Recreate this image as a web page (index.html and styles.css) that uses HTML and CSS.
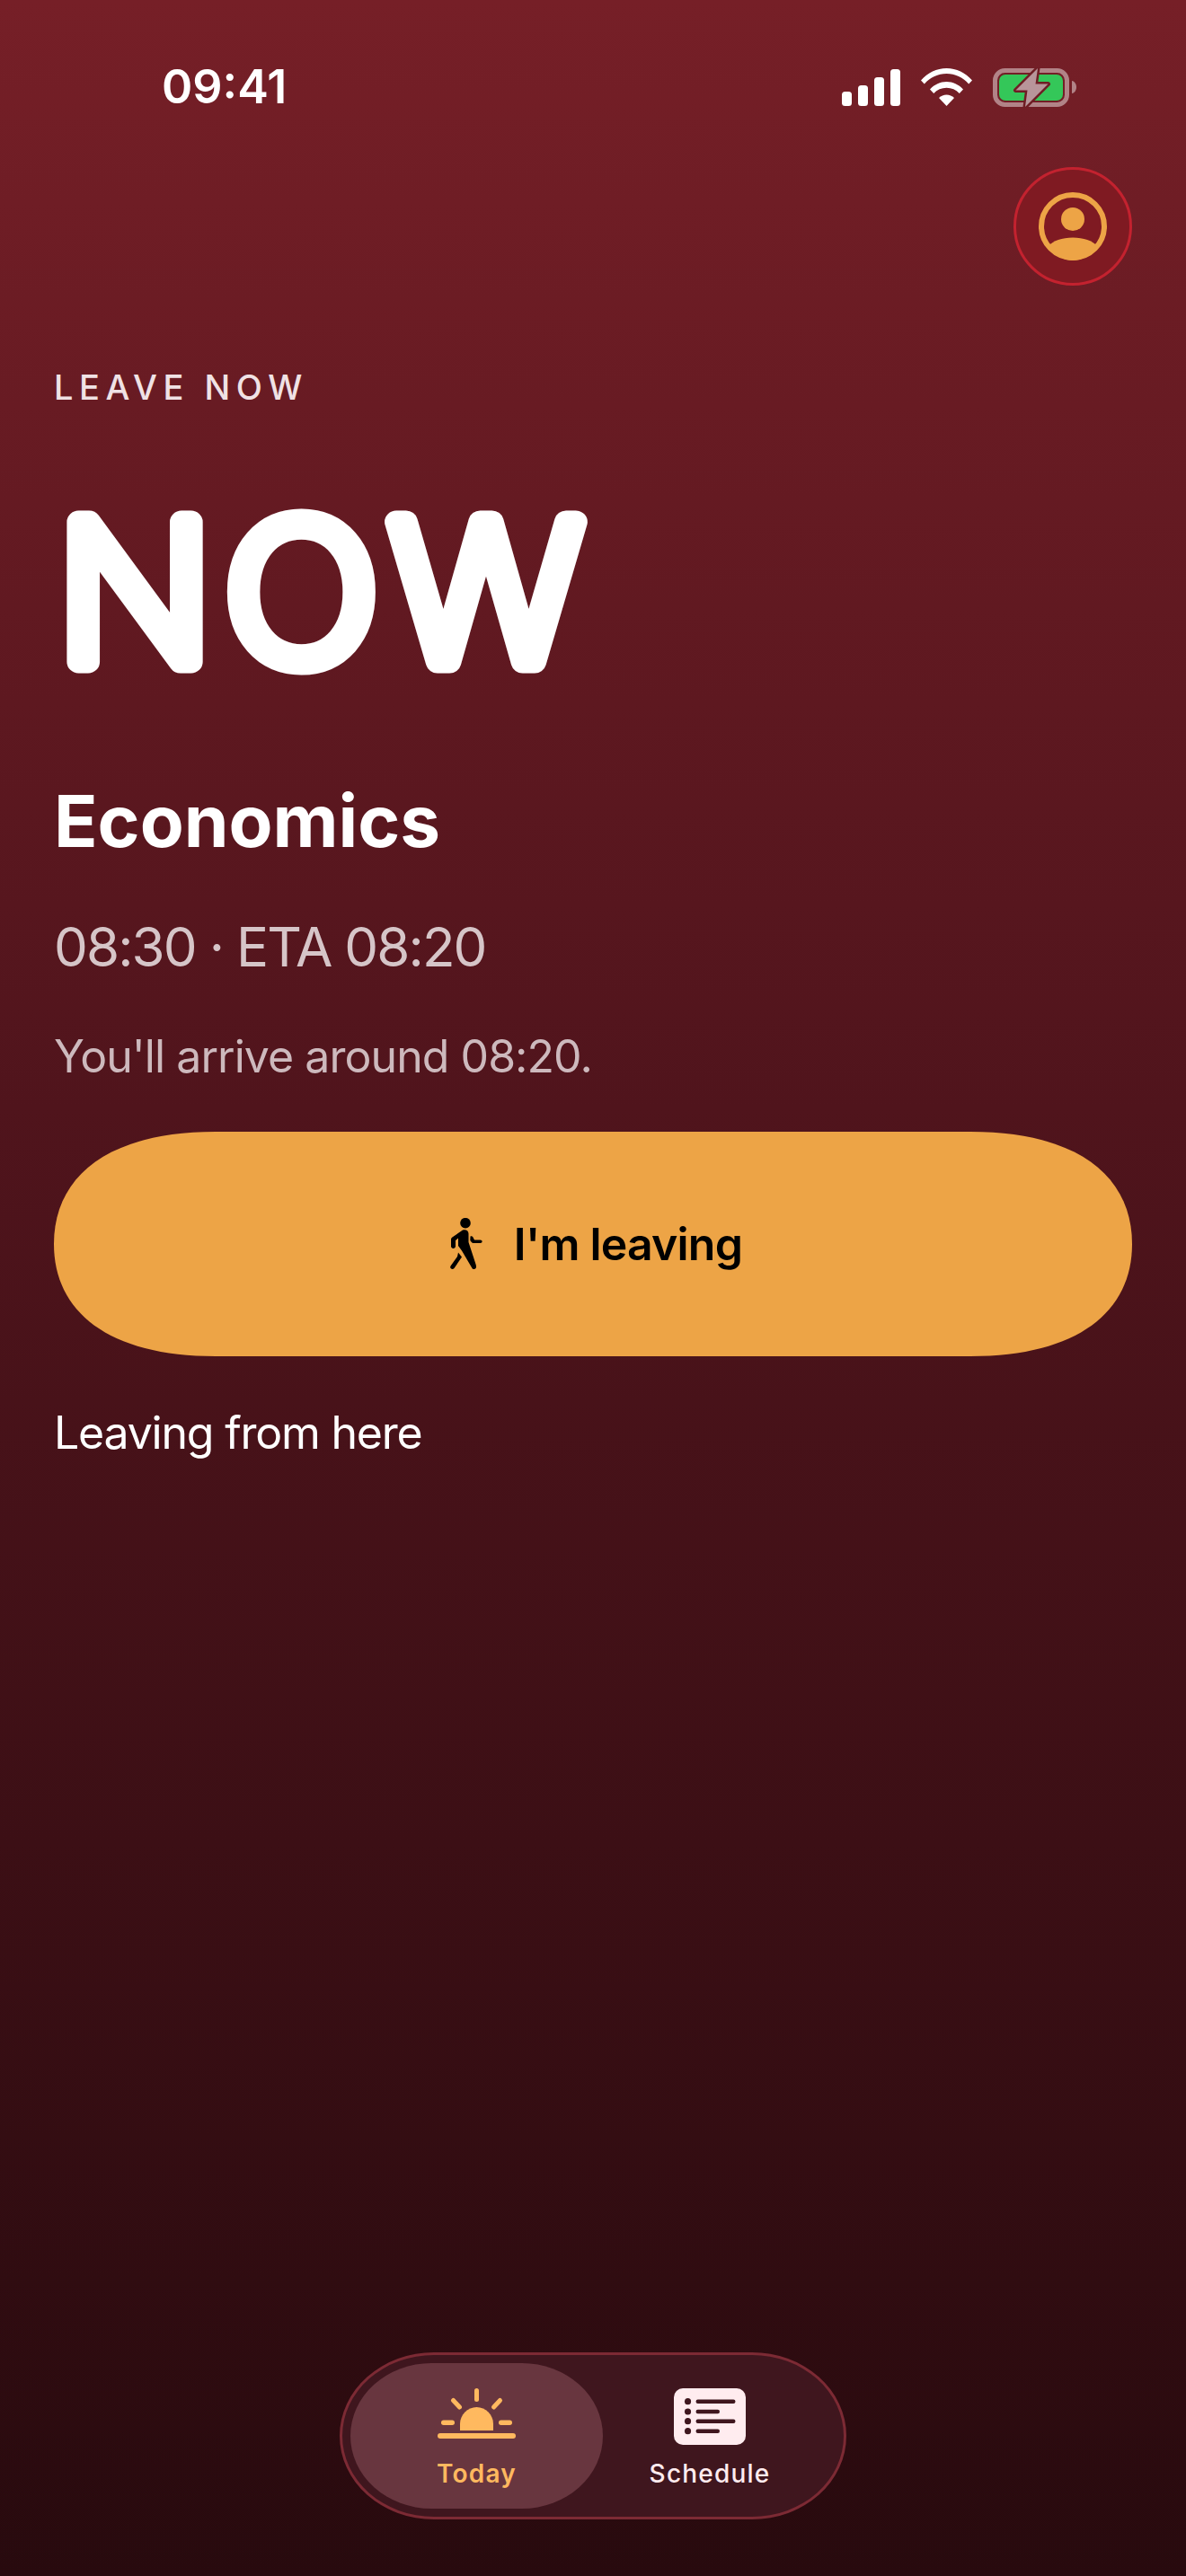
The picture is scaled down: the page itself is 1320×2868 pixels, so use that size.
FILE: index.html
```html
<!DOCTYPE html>
<html lang="en">
<head>
  <meta charset="UTF-8" />
  <meta name="viewport" content="width=device-width, initial-scale=1.0" />
  <title>Leave now</title>
  <link rel="stylesheet" href="styles.css">
</head>
<body>
  <div class="screen">
    <header class="status-bar">
      <span class="clock">09:41</span>
      <div class="status-icons">
        <svg class="icon-signal" viewBox="0 0 65 41" width="65" height="41">
          <rect x="0" y="25" width="11" height="16" rx="3.5" />
          <rect x="18" y="18" width="11" height="23" rx="3.5" />
          <rect x="36" y="9" width="11" height="32" rx="3.5" />
          <rect x="54" y="0" width="11" height="41" rx="3.5" />
        </svg>
        <svg class="icon-wifi" viewBox="0 0 57 42" width="57" height="42">
          <path d="M0 13.500C7.500 4.800 17.500 0 28.500 0S49.500 4.800 57 13.500L53.200 17.500C46.500 10 38 6 28.500 6S10.500 10 3.800 17.500Z" />
          <path d="M10 23.500C15 18 21.500 15 28.500 15S42 18 47 23.500L42.800 28C39 24 34 21.800 28.500 21.800S18 24 14.200 28Z" />
          <path d="M20 33C22.300 30.700 25.300 29.500 28.500 29.500S34.700 30.700 37 33L28.500 42Z" />
        </svg>
        <svg class="icon-battery" viewBox="0 0 93 45" width="93" height="45">
          <rect class="batt-frame" x="2.500" y="3.500" width="80" height="38" rx="11" />
          <path class="batt-nub" d="M88 15C91 15.500 93 18.500 93 22S91 28.500 88 29Z" />
          <rect class="batt-level" x="7" y="8" width="71" height="29" rx="7" />
          <path class="batt-bolt" d="M50 1L25.500 25.500H38.500L36 44L61.500 18.500H47.500Z" />
        </svg>
      </div>
    </header>

    <div class="top-actions">
      <button class="profile-btn" aria-label="Profile">
        <svg viewBox="0 0 76 76" width="76" height="76">
          <circle class="ring" cx="38" cy="38" r="35" />
          <circle class="fill" cx="38" cy="30" r="13" />
          <path class="fill" d="M11 60C16 54 26 50.500 38 50.500S60 54 65 60C58.500 70 48.500 76 38 76S17.500 70 11 60Z" />
        </svg>
      </button>
    </div>

    <main class="content">
      <p class="eyebrow">LEAVE NOW</p>
      <svg class="headline" viewBox="0 0 640 270" width="640" height="270" role="img">
        <text transform="translate(4 238) scale(1.05 1)">NOW</text>
      </svg>
      <h1 class="course">Economics</h1>
      <p class="times">08:30 · ETA 08:20</p>
      <p class="arrival">You'll arrive around 08:20.</p>
      <button class="leave-btn">
        <svg viewBox="0 0 36 58" width="36" height="58">
          <circle cx="17" cy="5.700" r="5.800" />
          <path d="M14 13.500C17 12.500 20.500 13.500 20.500 17.500V27L28.500 51.500C29.500 54.500 29 56 27.500 56.800C26 57.500 25 56.800 24.200 55.500L13 36.500L9 31V22.500L6 25V31.500C6 34.800 1 34.800 1 31.500V24C1 23 1.300 22.300 2 21.800Z" />
          <path d="M9 38.500L13 43.500L4.500 56C2.500 58.500 -1.200 56 0.700 53.300L8 43Z" />
          <path d="M22.500 20.500C23.500 20 24.500 20.200 25.200 21L27 24.500H33.500C36.300 24.500 36.300 28 33.500 28H26C25 28 24.300 27.500 23.800 27L22.300 25Z" />
        </svg>
        <span>I'm leaving</span>
      </button>
      <p class="origin">Leaving from here</p>
    </main>

    <nav class="tab-bar">
      <a class="tab tab-active">
        <svg viewBox="0 0 87 63" width="87" height="63">
          <rect x="41" y="0" width="5" height="15" rx="2.500" />
          <path class="ray" d="M17.500 13.500L24.500 21" />
          <path class="ray" d="M69.500 13.500L62.500 21" />
          <rect x="4" y="35.500" width="15" height="5.500" rx="2.700" />
          <rect x="68" y="35.500" width="15" height="5.500" rx="2.700" />
          <path d="M25 47V39.500C25 29.500 33.500 21 43.500 21S62 29.500 62 39.500V47Z" />
          <rect x="0" y="50" width="87" height="6" rx="3" />
        </svg>
        <span>Today</span>
      </a>
      <a class="tab">
        <svg viewBox="0 0 80 63" width="80" height="63">
          <rect class="sheet" x="0" y="0" width="80" height="63" rx="10" />
          <circle class="dot" cx="15.500" cy="14.700" r="3.600" />
          <circle class="dot" cx="15.500" cy="26" r="3.600" />
          <circle class="dot" cx="15.500" cy="36.700" r="3.600" />
          <circle class="dot" cx="15.500" cy="47.700" r="3.600" />
          <rect class="dot" x="24.500" y="12.500" width="44" height="4.500" rx="2.200" />
          <rect class="dot" x="24.500" y="23.800" width="26.500" height="4.500" rx="2.200" />
          <rect class="dot" x="24.500" y="34.500" width="44" height="4.500" rx="2.200" />
          <rect class="dot" x="24.500" y="45.500" width="26.500" height="4.500" rx="2.200" />
        </svg>
        <span>Schedule</span>
      </a>
    </nav>
  </div>
</body>
</html>
```

FILE: styles.css
```css
* {
  box-sizing: border-box;
}
html, body {
  margin: 0;
  padding: 0;
}
body {
  font-family: Inter, "Noto Sans", sans-serif;
  color: #ffffff;
}
p, h1 {
  margin: 0;
}
button {
  font-family: inherit;
  border: none;
  padding: 0;
  cursor: pointer;
}
.screen {
  width: 1320px;
  height: 2868px;
  display: flex;
  flex-direction: column;
  overflow: hidden;
  background: linear-gradient(180deg, #761f27 0%, #50141c 43%, #280a0e 100%);
}

/* status bar */
.status-bar {
  display: flex;
  justify-content: space-between;
  align-items: center;
  height: 194px;
  padding: 0 122px 0 180px;
  flex: none;
  margin-bottom: -8px;
}
.clock {
  font-size: 52px;
  font-weight: 600;
  line-height: 1;
}
.status-icons {
  display: flex;
  align-items: center;
  gap: 23px;
}
.icon-signal, .icon-wifi {
  fill: #ffffff;
}
.batt-frame {
  fill: none;
  stroke: rgba(255, 255, 255, 0.45);
  stroke-width: 5;
}
.batt-nub {
  fill: rgba(255, 255, 255, 0.45);
}
.batt-level {
  fill: #34c759;
}
.batt-bolt {
  fill: #b8959a;
  stroke: #6f1d24;
  stroke-width: 5;
  paint-order: stroke;
  stroke-linejoin: round;
}

/* profile */
.top-actions {
  display: flex;
  justify-content: flex-end;
  padding-right: 60px;
  flex: none;
}
.profile-btn {
  width: 132px;
  height: 132px;
  border-radius: 50%;
  border: 3px solid #c3222f;
  background-color: #7f1a22;
  display: flex;
  justify-content: center;
  align-items: center;
}
.ring {
  fill: none;
  stroke: #eda446;
  stroke-width: 6;
}
.fill {
  fill: #eda446;
}

/* main content */
.content {
  padding: 0 60px;
  flex: 1;
  display: flex;
  flex-direction: column;
  align-items: flex-start;
}
.eyebrow {
  margin-top: 91px;
  font-size: 38px;
  font-weight: 500;
  line-height: 44px;
  letter-spacing: 6.500px;
  color: #f0e2e5;
}
.headline {
  display: block;
  margin-top: 46px;
  overflow: visible;
}
.headline text {
  font-family: Inter, sans-serif;
  font-size: 214px;
  font-weight: 200;
  fill: #ffffff;
  stroke: #ffffff;
  stroke-width: 25px;
  stroke-linejoin: round;
  stroke-linecap: round;
  letter-spacing: 14px;
}
.course {
  margin-top: 97px;
  font-size: 80px;
  font-weight: 700;
  line-height: 96px;
}
.times {
  margin-top: 56px;
  font-size: 60px;
  font-weight: 400;
  line-height: 72px;
  letter-spacing: -1.900px;
  color: #d6c5c8;
}
.arrival {
  margin-top: 56px;
  font-size: 50px;
  font-weight: 400;
  line-height: 60px;
  letter-spacing: -0.950px;
  color: #cdb9bd;
}
.leave-btn {
  margin-top: 54px;
  width: 1200px;
  height: 250px;
  clip-path: path("M0 125C0 50 60 0 180 0H1020C1140 0 1200 50 1200 125S1140 250 1020 250H180C60 250 0 200 0 125Z");
  background-color: #eda446;
  color: #000000;
  display: flex;
  justify-content: center;
  align-items: center;
  gap: 35px;
  padding-left: 7px;
  font-size: 50px;
  font-weight: 600;
  letter-spacing: -0.800px;
}
.origin {
  margin-top: 55px;
  font-size: 50px;
  font-weight: 400;
  line-height: 60px;
  letter-spacing: -1.200px;
}

/* tab bar */
.tab-bar {
  align-self: center;
  flex: none;
  margin-bottom: 63px;
  width: 564px;
  height: 186px;
  padding: 9px;
  border: 3px solid #7c2a34;
  border-radius: 105px / 93px;
  background-color: #3f161e;
  display: flex;
  align-items: stretch;
}
.tab {
  display: flex;
  flex-direction: column;
  align-items: center;
  gap: 15px;
  padding-top: 28px;
  font-size: 28px;
  line-height: 34px;
  font-weight: 500;
  letter-spacing: 1.200px;
  flex: none;
  width: 238px;
  color: #ffecef;
}
.tab-active {
  width: 281px;
  border-radius: 90px / 81px;
  background-color: #68363f;
  color: #ffb95f;
  font-weight: 600;
}
.tab-active svg {
  fill: #ffb95f;
}
.ray {
  fill: none;
  stroke: #ffb95f;
  stroke-width: 5;
  stroke-linecap: round;
}
.sheet {
  fill: #ffecef;
}
.dot {
  fill: #3f161e;
}
```
